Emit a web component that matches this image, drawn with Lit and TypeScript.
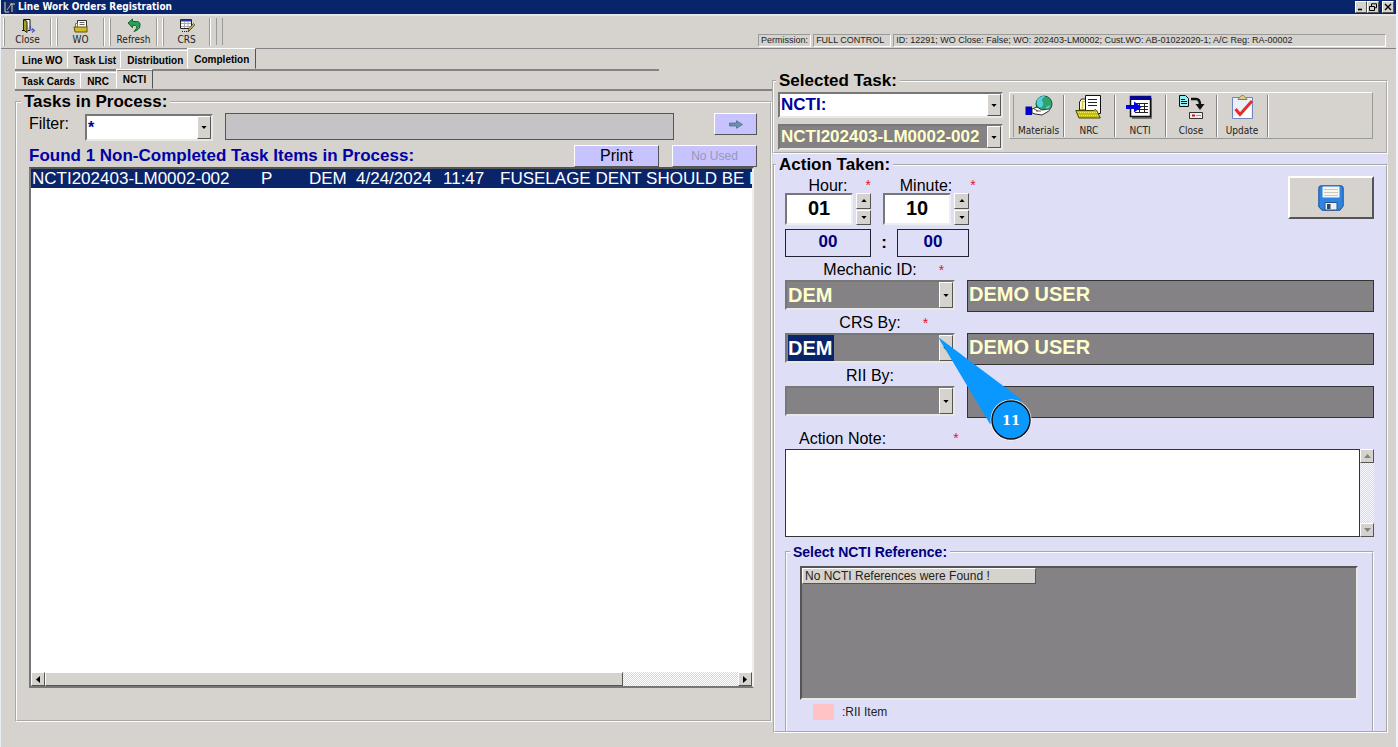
import { LitElement, html, css, svg, nothing } from "lit";
import { customElement, property } from "lit/decorators.js";
import { classMap } from "lit/directives/class-map.js";

const icons: Record<string, unknown> = {
  door: svg`<svg width="16" height="16" viewBox="0 0 16 16"><path d="M4 1.500h6v10" fill="#fff" stroke="#111"/><path d="M3.500 1.500l3.500 2v11l-3.500-2.500z" fill="#a9a21a" stroke="#222"/><path d="M2 12.500h2M8 12.500h2" stroke="#111"/><path d="M10.500 8v4h3M12 10.500l2.500 2-2.500 2" fill="none" stroke="#4a54b8" stroke-width="1.200"/></svg>`,
  folder: svg`<svg width="16" height="16" viewBox="0 0 16 16"><path d="M4.500 2.500h9v9h-9z" fill="#fff" stroke="#333"/><path d="M6.500 4.500h5M6.500 6.500h5" stroke="#666"/><path d="M2.500 5.500h2v4h-2z" fill="#fffccf" stroke="#777"/><path d="M1 9h11.500l1.500-1v6H2z" fill="#d2bc23" stroke="#5d5511"/></svg>`,
  refresh: svg`<svg width="16" height="16" viewBox="0 0 16 16"><path d="M2 5l4.500-4v2.500h4c3 0 4 2 3.500 4.500-.5 3-3 4.500-6 5.500 2-2 3-3.500 2.500-5-.4-1-1.400-1.200-4-1.200v2.500z" fill="#25a552" stroke="#10552a" stroke-width=".9"/></svg>`,
  crs: svg`<svg width="16" height="16" viewBox="0 0 16 16"><path d="M1.500 1.500h11v9h-11z" fill="#fff" stroke="#222"/><path d="M2 2.500h10" stroke="#2b35a8" stroke-width="2"/><path d="M2 5.500h10M2 8.500h10M5.500 4v6M9 4v6" stroke="#aaa"/><path d="M9 14l1-3.500 4.500-5 1.300 1.300-4.500 5z" fill="#e0c03a" stroke="#333" stroke-width=".8"/><path d="M3 13.500h6" stroke="#222" stroke-dasharray="1 1"/></svg>`,
  materials: svg`<svg width="28" height="24" viewBox="0 0 28 24"><circle cx="19" cy="9" r="8" fill="#2fa36b" stroke="#175c44"/><path d="M12 5c2-3 5-4.500 8-4-1 2-3 2-3 4s2 2 1 5-3 3-4 2-3-3-2-7z" fill="#54cfe0"/><path d="M21 12l4-2-1 3-3 2z" fill="#54cfe0"/><path d="M7 14l5-2 5 3 6-1c2 0 2 1.500 0 2.500L17 20l-7-1-3-1z" fill="#fff" stroke="#333"/><path d="M11 16h5M9 14l4 2" stroke="#333" stroke-width=".8"/><path d="M.5 11.500H7v8.500H.5z" fill="#0000c8"/></svg>`,
  nrc: svg`<svg width="28" height="24" viewBox="0 0 28 24"><path d="M4.500 15V7l2-3h6v11z" fill="#fffde0" stroke="#222"/><path d="M7.500 14V6.500h3" fill="none" stroke="#d2c640" stroke-width="1.500"/><path d="M10.500.5h15v18h-15z" fill="#fff" stroke="#111"/><path d="M13 4.500h9M13 7.500h9M13 10.500h9" stroke="#222"/><path d="M.8 15.500h18l2-1 1 1 3.500 7.500H4z" fill="#c8be10" stroke="#4b4600"/><path d="M3 17.500h20M4 20.500h20" stroke="#f3ef62" stroke-dasharray="1 1"/></svg>`,
  ncti: svg`<svg width="28" height="24" viewBox="0 0 28 24"><path d="M6 3h20v21H6z" fill="#777"/><path d="M4.500 1.500h20v20h-20z" fill="#fff" stroke="#111" stroke-width="1.500"/><path d="M4 1h21v4H4z" fill="#06068c"/><path d="M9 8.500h13M9 11.500h13M9 14.500h13M9 17.500h13M13.500 8v10M18.500 8v10" stroke="#222"/><path d="M0 10h8V6.500l7.500 5.500L8 17.500V14H0z" fill="#0000e0"/></svg>`,
  close: svg`<svg width="28" height="24" viewBox="0 0 28 24"><path d="M2.500.5h6l3 3v8h-9z" fill="#8ff0f5" stroke="#111"/><path d="M4 4.500h4M4 6.500h6M4 8.500h6" stroke="#111"/><path d="M14 4h5c3 0 4 2 4 6" fill="none" stroke="#111" stroke-width="2.500"/><path d="M18.500 9h9L23 15z" fill="#111"/><path d="M12.500 17.500h13v6h-13z" fill="#eee" stroke="#333"/><path d="M15 20.500h3" stroke="#e00030" stroke-width="2"/><path d="M19 20.500h5" stroke="#999"/></svg>`,
  update: svg`<svg width="28" height="24" viewBox="0 0 28 24"><path d="M4.500 2.500h20v21h-20z" fill="#e9f0fc" stroke="#6e86bd"/><path d="M6 22L23 8v15H6z" fill="#fff"/><path d="M10 4.500c0-2 2-1.500 2.500-3s3.500-1.500 4 0 2.500 1 2.500 3z" fill="#d9cb8b" stroke="#8d7d3e"/><path d="M7.500 14l4.500 5.500L24 6" fill="none" stroke="#e22f26" stroke-width="3"/></svg>`,
  save: svg`<svg width="26" height="26" viewBox="0 0 26 26"><path d="M3 .8h20q2.200 0 2.200 2.200v18l-3.200 4.200H4L.8 22V3Q.8.8 3 .8z" fill="#2d84e4" stroke="#195097"/><path d="M4.500 1.500h17v11h-17z" fill="#f6f6f0"/><path d="M6 4.500h14M6 7.500h14M6 10.500h14" stroke="#c9c9c0"/><path d="M7 17.500h12V25H7z" fill="#eceff2" stroke="#24548c"/><path d="M9 19h3.500v5H9z" fill="#35455e"/></svg>`,
  arrow: svg`<svg width="14" height="9" viewBox="0 0 14 9"><path d="M.5 3h7V.700L13.500 4.500 7.500 8.300V6h-7z" fill="#6b92ac" stroke="#4c6f8c" stroke-width=".8"/></svg>`,
  app: svg`<svg width="13" height="13" viewBox="0 0 13 13"><path d="M0 0h13v13H0z" fill="#15295e"/><path d="M2 1v10h4M7 3h5M9 3v8" fill="none" stroke="#c9d2df"/><path d="M4 9l5-7" stroke="#c7ad4e"/></svg>`,
  min: svg`<svg width="8" height="8" viewBox="0 0 8 8"><path d="M1 6.500h4" stroke="#000" stroke-width="1.600"/></svg>`,
  restore: svg`<svg width="8" height="8" viewBox="0 0 8 8"><path d="M2.500 3V.8h5v4H6M.5 3.500h5v4h-5z" fill="none" stroke="#000"/></svg>`,
  x: svg`<svg width="8" height="8" viewBox="0 0 8 8"><path d="M1 1l6 6M7 1L1 7" stroke="#000" stroke-width="1.400"/></svg>`,
  up: svg`<svg width="7" height="4" viewBox="0 0 7 4"><path d="M0 4h7L3.500 0z" fill="currentColor"/></svg>`,
  down: svg`<svg width="7" height="4" viewBox="0 0 7 4"><path d="M0 0h7L3.500 4z" fill="currentColor"/></svg>`,
  left: svg`<svg width="4" height="7" viewBox="0 0 4 7"><path d="M4 0v7L0 3.500z" fill="currentColor"/></svg>`,
  right: svg`<svg width="4" height="7" viewBox="0 0 4 7"><path d="M0 0v7l4-3.500z" fill="currentColor"/></svg>`,
};

const base = css`
  * { box-sizing: border-box; }
  button, select, input, textarea {
    font: inherit; color: inherit; margin: 0; padding: 0; border: 0; border-radius: 0; background: none;
  }
  svg { display: block; flex: none; }
  .raised {
    background: #d6d3ce; border: 1px solid; border-color: #fff #555 #555 #fff;
    display: flex; align-items: center; justify-content: center;
  }
`;

@customElement("combo-box")
class ComboBox extends LitElement {
  @property() value = "";
  @property() label = "";
  @property({ type: Boolean }) dark = false;
  @property({ type: Boolean }) selected = false;
  static styles = [base, css`
    :host { display: block; }
    .box {
      height: 100%; display: grid; grid-template-columns: minmax(0, 1fr) 14px; position: relative;
      border: 2px solid; border-color: #777 #e8e8e4 #e8e8e4 #777;
      background: #fff; color: #00009c; font-weight: bold;
    }
    .dark { background: #848284; color: #ffffce; }
    .selected { color: #fff; }
    select {
      appearance: none; grid-area: 1 / 1 / 2 / 3; width: 100%; height: 100%; outline: none; padding-left: 1px;
    }
    .selected select {
      background: linear-gradient(#0a246a, #0a246a) 1px 0 / 46px 100% no-repeat;
    }
    .drop { grid-area: 1 / 2; pointer-events: none; color: #000; }
    svg { width: 6px; height: 3px; }
  `];
  render() {
    return html`<div class=${classMap({ box: true, dark: this.dark, selected: this.selected })}>
      <select aria-label=${this.label}><option>${this.value}</option></select>
      <span class="drop raised">${icons.down}</span>
    </div>`;
  }
}

@customElement("tool-button")
class ToolButton extends LitElement {
  @property() icon = "";
  @property() label = "";
  static styles = [base, css`
    :host { display: flex; }
    button {
      flex: 1; display: flex; flex-direction: column; align-items: center; justify-content: space-between;
      font: 10px/12px "DejaVu Sans Condensed", "DejaVu Sans", sans-serif; color: #222;
    }
  `];
  render() {
    return html`<button>${icons[this.icon]}<span>${this.label}</span></button>`;
  }
}

@customElement("app-root")
class AppRoot extends LitElement {
  static styles = [base, css`
    :host {
      display: flex; flex-direction: column; min-height: 100vh;
      background: #d6d3ce; color: #000; border-left: 1px solid #e9eef8; border-right: 2px solid #f4f5f8;
      font-family: "Liberation Sans", Arial, sans-serif; font-size: 16px; line-height: 20px;
    }
    .title {
      display: flex; align-items: center; height: 16px; background: #08246b; color: #fff;
      border-bottom: 2px solid #e6e6ea; padding: 0 2px; gap: 2px;
    }
    .title h1 { margin: 0; flex: 1; font: bold 10px/14px "DejaVu Sans Condensed", "DejaVu Sans", sans-serif; }
    .winbtns { display: flex; color: #000; }
    .winbtns button { width: 12px; height: 12px; }
    .winbtns button:last-child { margin-left: 3px; }
    .toolbar {
      display: flex; justify-content: space-between; height: 33px; border-bottom: 1px solid #848284;
      padding: 1px 10px 0 3px;
    }
    .tools { display: flex; }
    .tools tool-button {
      width: 47px; margin: 1px 6px 2px 0; border-left: 1px solid #9a9a96; border-right: 1px solid #9a9a96;
      box-shadow: -1px 0 #fff, 1px 0 #fff;
    }
    .tools .end { width: 7px; margin: 1px 0 3px; border: solid #9a9a96; border-width: 0 1px; }
    .status {
      display: flex; gap: 2px; align-self: flex-end; width: calc(45% + 6px); margin-bottom: 1px;
      font-size: 9px; line-height: 11px; color: #222; white-space: nowrap;
    }
    .status span { border: 1px solid; border-color: #9a9a96 #fff #fff #9a9a96; padding: 0 2px; }
    .status span:nth-child(2) { padding-right: 6px; }
    .status span:last-child { flex: 1; }

    .tabs { display: flex; align-items: flex-end; border-bottom: 2px solid #848284; }
    .tabs.main { width: calc(46% + 2px); height: 22px; margin: 0 0 0 14px; }
    .tabs.sub { height: 20px; }
    .tab {
      font-size: 10px; line-height: 12px; font-weight: bold; height: 17px; padding: 2px 5px 0 6px;
      border: 1px solid; border-color: #fff #555 transparent #fff; margin-right: -1px;
    }
    .main .tab { height: 19px; padding-right: 4px; }
    .tab.active { height: 20px; padding-right: 6px; }
    .main .tab.active { height: 21px; }
    .tab.before { border-right-color: transparent; }
    .sub .tab.before { padding-right: 7px; }

    .body { flex: 1; display: grid; grid-template-columns: 757fr 616fr; padding: 0 8px 14px 14px; }
    .left { display: flex; flex-direction: column; padding-bottom: 11px; }
    .right { display: flex; flex-direction: column; }
    fieldset { margin: 0; min-width: 0; border: 2px groove #fcfcfc; padding: 0; }
    legend { font-weight: bold; font-size: 17px; line-height: 20px; padding: 0 3px; margin-left: -8px; }
    .tasks { flex: 1; display: flex; flex-direction: column; padding: 1px 13px 32px 12px; margin-top: 1px; }
    .filter { display: flex; align-items: flex-start; }
    .filter label { width: 56px; line-height: 22px; }
    .filter combo-box { width: 128px; height: 27px; margin-top: 1px; }
    .filter output { flex: 1; height: 27px; margin: 0 40px 0 12px; background: #c6c3c6; border: 1px solid #555; }
    .lav { background: #c6c3ff; }
    .filter .lav { width: 43px; height: 22px; }
    .found { display: flex; align-items: flex-end; gap: 13px; margin-top: 4px; }
    .found h2 { flex: 1; margin: 0; font-size: 17px; line-height: 20px; color: #0000a8; white-space: nowrap; padding-bottom: 1px; }
    .found button { width: 85px; height: 22px; font-size: 16px; }
    .found button:disabled { font-size: 12px; color: #9a96b8; }
    .list {
      flex: 1; display: flex; flex-direction: column; margin-right: 3px; background: #fff;
      border: 2px solid; border-color: #555 #eee #777 #777;
    }
    .rows { flex: 1; overflow: hidden; }
    table { border-collapse: collapse; table-layout: fixed; width: 100%; font-size: 17px; line-height: 19px; }
    td { padding: 0; white-space: nowrap; }
    tr { background: #0a246a; color: #fff; }
    .c1 { width: 230px; padding-left: 1px; } .c2 { width: 48px; } .c3 { width: 47px; } .c4 { width: 87px; } .c5 { width: 57px; }
    td.c6 { overflow: hidden; }
    .track { background: repeating-conic-gradient(#fff 0 25%, #d9d9d4 0 50%) 0 0 / 2px 2px; }
    .hscroll { display: flex; height: 14px; }
    .hscroll button { width: 14px; }
    .hscroll .thumb { flex: 578; }
    .hscroll .space { flex: 116; }

    .selected { display: flex; gap: 6px; padding: 0 13px 4px 4px; height: 83px; }
    .selected legend { margin-left: -2px; }
    .combos { display: grid; gap: 6px; grid-template-rows: 26px 26px; width: 225px; font-size: 17px; margin-top: 1px; }
    .cards {
      flex: 1; display: flex; height: 47px; margin-top: 1px; padding: 2px 0 1px 3px;
      border: 1px solid; border-color: #fff #9a9a96 #9a9a96 #fff;
    }
    .cards tool-button { width: 51px; border-right: 1px solid #848284; box-shadow: 1px 0 #fff; }
    .cards tool-button:first-child { border-left: 1px solid #9a9a96; }

    .action { flex: 1; display: flex; background: #dedff7; margin-left: 1px; padding-top: 1px; }
    .action > fieldset { flex: 1; padding: 1px 12px 0 10px; display: flex; flex-direction: column; }
    .action > fieldset > legend { margin-left: -9px; }
    .time { display: flex; justify-content: space-between; align-items: flex-start; }
    .clock { display: grid; grid-template-columns: 86px 86px; column-gap: 12px; }
    .lbl { display: grid; grid-template-columns: minmax(0, 1fr) auto minmax(0, 1fr); height: 20px; }
    .lbl > label { grid-column: 2; }
    .lbl > i { color: #f01020; font: 14px/20px "Liberation Sans", Arial, sans-serif; padding-left: 22px; }
    .clock .lbl { height: 17px; }
    .clock .lbl > i { line-height: 18px; padding-left: 18px; }
    .spin { display: flex; gap: 3px; height: 32px; }
    .spin input {
      flex: 1; min-width: 0; background: #fff; font-weight: bold; font-size: 20px; text-align: center;
      border: 2px solid; border-color: #777 #eee #eee #777; padding-bottom: 1px;
    }
    .spin > span { display: grid; width: 15px; grid-template-rows: 1fr 1fr; gap: 1px; }
    .spin svg { width: 6px; height: 3px; }
    .totals { display: flex; align-items: center; margin-top: 4px; font-weight: bold; font-size: 17px; grid-column: 1 / 3; }
    .totals output { width: 86px; height: 28px; border: 1px solid #223; color: #00007c; text-align: center; line-height: 23px; }
    .totals output:last-child { width: 72px; }
    .totals span { width: 26px; text-align: center; }
    .save { width: 86px; height: 43px; border-width: 2px; }
    .people { margin-top: 3px; position: relative; }
    .person { display: grid; grid-template-columns: 170px 1fr; column-gap: 12px; font-size: 16px; }
    .person + .person { margin-top: 1px; }
    .person .lbl { grid-column: 1; }
    .person combo-box { grid-column: 1; height: 30px; font-size: 20px; }
    .person output {
      grid-column: 2; height: 32px; background: #848284; color: #ffffce; border: 1px solid #333;
      font-weight: bold; font-size: 20px; line-height: 27px; padding-left: 1px;
    }
    .callout { position: absolute; left: 151px; top: 76px; pointer-events: none; }
    .note-label { display: flex; gap: 67px; padding-left: 14px; margin-top: 11px; }
    .note-label i { color: #f01020; font: 14px/18px "Liberation Sans", Arial, sans-serif; }
    .note { display: flex; height: 88px; }
    .note textarea { flex: 1; resize: none; background: #fff; border: 1px solid #333; outline: none; overflow: hidden; }
    .vscroll { width: 14px; display: flex; flex-direction: column; color: #848284; }
    .vscroll button { height: 14px; }
    .vscroll .track { flex: 1; opacity: .7; }
    .refs { flex: 1; display: flex; flex-direction: column; margin-top: 6px; padding: 5px 14px 11px 13px; border-bottom: 0; }
    .refs legend { font-size: 14px; line-height: 18px; color: #00007c; margin-left: -10px; }
    .grid { flex: 1; background: #848284; border: 2px solid; border-color: #555 #e8e8e4 #e8e8e4 #555; font-size: 12px; line-height: 14px; }
    .grid .cell { width: 234px; justify-content: flex-start; padding-left: 2px; color: #222; }
    .legend { display: flex; align-items: center; gap: 8px; margin: 4px 0 0 13px; font-size: 12px; line-height: 16px; color: #222; }
    .legend b { width: 21px; height: 16px; background: #ffc3c6; }
  `];

  private person(id: string, label: string, value: string, name: string, required = true, selected = false) {
    return html`<div class="person">
      <div class="lbl"><label for=${id}>${label}</label>${required ? html`<i>*</i>` : nothing}</div>
      <combo-box id=${id} label=${label} value=${value} dark ?selected=${selected}></combo-box>
      <output>${name}</output>
    </div>`;
  }

  private spinner(id: string, label: string, value: string) {
    return html`<div>
      <div class="lbl"><label for=${id}>${label}</label><i>*</i></div>
      <div class="spin">
        <input id=${id} .value=${value}>
        <span><button class="raised" aria-label="Increase">${icons.up}</button><button class="raised" aria-label="Decrease">${icons.down}</button></span>
      </div>
    </div>`;
  }

  render() {
    return html`
      <header class="title">${icons.app}<h1>Line Work Orders Registration</h1>
        <div class="winbtns">
          <button class="raised" aria-label="Minimize">${icons.min}</button>
          <button class="raised" aria-label="Restore">${icons.restore}</button>
          <button class="raised" aria-label="Close window">${icons.x}</button>
        </div>
      </header>
      <div class="toolbar">
        <div class="tools">
          <tool-button icon="door" label="Close"></tool-button>
          <tool-button icon="folder" label="WO"></tool-button>
          <tool-button icon="refresh" label="Refresh"></tool-button>
          <tool-button icon="crs" label="CRS"></tool-button>
          <div class="end"></div>
        </div>
        <div class="status"><span>Permission:</span><span>FULL CONTROL</span><span>ID: 12291; WO Close: False; WO: 202403-LM0002; Cust.WO: AB-01022020-1; A/C Reg: RA-00002</span></div>
      </div>
      <nav class="tabs main">
        <button class="tab">Line WO</button><button class="tab">Task List</button>
        <button class="tab before">Distribution</button><button class="tab active">Completion</button>
      </nav>
      <main class="body">
        <div class="left">
          <nav class="tabs sub">
            <button class="tab">Task Cards</button><button class="tab before">NRC</button><button class="tab active">NCTI</button>
          </nav>
          <fieldset class="tasks">
            <legend>Tasks in Process:</legend>
            <div class="filter">
              <label for="filter">Filter:</label>
              <combo-box id="filter" label="Filter" value="*"></combo-box>
              <output></output>
              <button class="lav raised" aria-label="Apply filter">${icons.arrow}</button>
            </div>
            <div class="found">
              <h2>Found 1 Non-Completed Task Items in Process:</h2>
              <button class="lav raised">Print</button>
              <button class="lav raised" disabled>No Used</button>
            </div>
            <div class="list">
              <div class="rows"><table><tbody><tr>
                <td class="c1">NCTI202403-LM0002-002</td><td class="c2">P</td><td class="c3">DEM</td>
                <td class="c4">4/24/2024</td><td class="c5">11:47</td><td class="c6">FUSELAGE DENT SHOULD BE E</td>
              </tr></tbody></table></div>
              <div class="hscroll">
                <button class="raised" aria-label="Scroll left">${icons.left}</button>
                <div class="thumb raised"></div><div class="space track"></div>
                <button class="raised" aria-label="Scroll right">${icons.right}</button>
              </div>
            </div>
          </fieldset>
        </div>
        <div class="right">
          <fieldset class="selected">
            <legend>Selected Task:</legend>
            <div class="combos">
              <combo-box label="Task type" value="NCTI:"></combo-box>
              <combo-box label="Task" value="NCTI202403-LM0002-002" dark></combo-box>
            </div>
            <div class="cards">
              <tool-button icon="materials" label="Materials"></tool-button>
              <tool-button icon="nrc" label="NRC"></tool-button>
              <tool-button icon="ncti" label="NCTI"></tool-button>
              <tool-button icon="close" label="Close"></tool-button>
              <tool-button icon="update" label="Update"></tool-button>
            </div>
          </fieldset>
          <section class="action">
            <fieldset>
              <legend>Action Taken:</legend>
              <div class="time">
                <div class="clock">
                  ${this.spinner("hour", "Hour:", "01")}${this.spinner("minute", "Minute:", "10")}
                  <div class="totals"><output>00</output><span>:</span><output>00</output></div>
                </div>
                <button class="save raised" aria-label="Save">${icons.save}</button>
              </div>
              <div class="people">
                ${this.person("mech", "Mechanic ID:", "DEM", "DEMO USER")}
                ${this.person("crs", "CRS By:", "DEM", "DEMO USER", true, true)}
                ${this.person("rii", "RII By:", "", "", false)}
                <svg class="callout" width="96" height="106" viewBox="0 0 96 106">
                  <path d="M2 1L86 64 54 88z" fill="#0a98ff"/>
                  <circle cx="75" cy="84" r="20.500" fill="#fff"/>
                  <circle cx="75" cy="84" r="19" fill="#0a98ff" stroke="#111" stroke-width="1.500"/>
                  <text x="75" y="89" text-anchor="middle" fill="#fff" font-family="DejaVu Serif, serif" font-weight="bold" font-size="13">11</text>
                </svg>
              </div>
              <div class="note-label"><label for="note">Action Note:</label><i>*</i></div>
              <div class="note">
                <textarea id="note"></textarea>
                <div class="vscroll">
                  <button class="raised" aria-label="Scroll up">${icons.up}</button><div class="track"></div>
                  <button class="raised" aria-label="Scroll down">${icons.down}</button>
                </div>
              </div>
              <fieldset class="refs">
                <legend>Select NCTI Reference:</legend>
                <div class="grid"><div class="cell raised">No NCTI References were Found !</div></div>
                <div class="legend"><b></b>:RII Item</div>
              </fieldset>
            </fieldset>
          </section>
        </div>
      </main>`;
  }
}
